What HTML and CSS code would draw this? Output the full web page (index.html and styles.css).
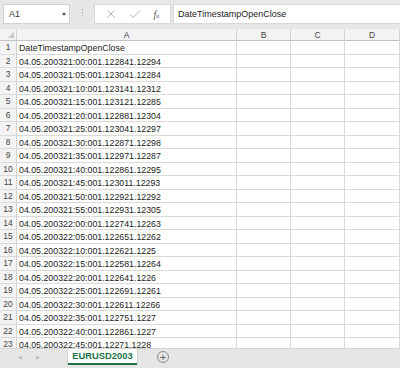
FILE: index.html
```html
<!DOCTYPE html>
<html lang="en">
<head>
	<meta charset="UTF-8">
	<title>EURUSD2003</title>
<link rel="stylesheet" href="styles.css">
</head>
<body>
<div class="app">
	<div class="bar">
		<div class="namebox">A1<span class="drop"></span></div>
		<div class="dots"></div>
		<div class="fxbox">
			<svg class="ico" width="10" height="10" viewBox="0 0 10 10"><path d="M1.5 1.5l7 7M8.5 1.5l-7 7" stroke="#b5b5b5" stroke-width="1" fill="none"/></svg>
			<svg class="ico" width="12" height="10" viewBox="0 0 12 10"><path d="M1 5.5l3.2 3L11 1.5" stroke="#b5b5b5" stroke-width="1" fill="none"/></svg>
			<span class="fx">f<small>x</small></span>
		</div>
		<div class="formula">DateTimestampOpenClose</div>
	</div>
	<div class="sheet">
		<div class="row head">
			<div class="corner"><span class="tri"></span></div>
			<div>A</div><div>B</div><div>C</div><div>D</div>
		</div>
		<div id="rows"></div>
	</div>
	<div class="tabs">
		<span class="arrow">&#9664;</span>
		<span class="arrow">&#9654;</span>
		<div class="tab">EURUSD2003</div>
		<span class="plus">+</span>
	</div>
</div>
<script type="text/javascript">
(function(){
	var data=['DateTimestampOpenClose',
		'04.05.200321:00:001.122841.12294',
		'04.05.200321:05:001.123041.12284',
		'04.05.200321:10:001.123141.12312',
		'04.05.200321:15:001.123121.12285',
		'04.05.200321:20:001.122881.12304',
		'04.05.200321:25:001.123041.12297',
		'04.05.200321:30:001.122871.12298',
		'04.05.200321:35:001.122971.12287',
		'04.05.200321:40:001.122861.12295',
		'04.05.200321:45:001.123011.12293',
		'04.05.200321:50:001.122921.12292',
		'04.05.200321:55:001.122931.12305',
		'04.05.200322:00:001.122741.12263',
		'04.05.200322:05:001.122651.12262',
		'04.05.200322:10:001.122621.1225',
		'04.05.200322:15:001.122581.12264',
		'04.05.200322:20:001.122641.1226',
		'04.05.200322:25:001.122691.12261',
		'04.05.200322:30:001.122611.12266',
		'04.05.200322:35:001.122751.1227',
		'04.05.200322:40:001.122861.1227',
		'04.05.200322:45:001.12271.1228'];
	var box=document.getElementById('rows');
	var html='';
	for(let i=0;i<data.length;i++){
		html+='<div class="row"><div class="num">'+(i+1)+'</div><div class="cell">'+data[i]+'</div><div></div><div></div><div></div></div>';
	}
	box.innerHTML=html;
})()
</script>
</body>
</html>
```
FILE: styles.css
```css
*{
	box-sizing: border-box;
}
body{
	margin: 0;
	font-family: "Liberation Sans", Arial, sans-serif;
	font-size: 8.8px;
	color: #222;
}
.app{
	width: 400px;
	height: 368px;
	display: flex;
	flex-direction: column;
	overflow: hidden;
}
.bar{
	height: 29px;
	flex: none;
	background: #e7e7e7;
	display: flex;
	align-items: flex-start;
	padding: 4px 0 0 3px;
}
.namebox{
	width: 67px;
	height: 20px;
	background: #fff;
	border: 1px solid #d0d0d0;
	display: flex;
	align-items: center;
	padding-left: 5px;
	font-size: 9px;
	color: #333;
	position: relative;
}
.drop{
	position: absolute;
	right: 3px;
	top: 8px;
	border-left: 2.5px solid transparent;
	border-right: 2.5px solid transparent;
	border-top: 3px solid #555;
}
.dots{
	width: 1px;
	height: 9px;
	margin: 5px 11px 0 12px;
	background: repeating-linear-gradient(#aaa 0 1px, transparent 1px 3px);
}
.fxbox{
	width: 77px;
	height: 20px;
	background: #fff;
	border: 1px solid #d8d8d8;
	display: flex;
	align-items: center;
	justify-content: space-around;
	padding: 0 4px;
}
.fx{
	font-family: "Liberation Serif", serif;
	font-style: italic;
	font-size: 10px;
	color: #555;
}
.fx small{
	font-size: 7px;
}
.formula{
	flex: 1;
	height: 20px;
	margin-left: 2px;
	background: #fff;
	border: 1px solid #d8d8d8;
	border-right: none;
	display: flex;
	align-items: center;
	padding-left: 4px;
	font-size: 9px;
}
.sheet{
	flex: 1;
	overflow: hidden;
	background: #fff;
}
.row{
	display: grid;
	grid-template-columns: 17px 220px 54px 54px 1fr;
	height: 13.5px;
}
.row > div{
	border-right: 1px solid #dadada;
	border-bottom: 1px solid #dadada;
	line-height: 13px;
	white-space: nowrap;
	overflow: hidden;
}
.head{
	height: 12px;
	background: #f3f3f3;
}
.head > div{
	text-align: center;
	color: #444;
	line-height: 12px;
	font-size: 8.5px;
	border-bottom-color: #c4c4c4;
	border-right-color: #d2d2d2;
}
.corner{
	position: relative;
}
.tri{
	position: absolute;
	right: 2px;
	bottom: 2px;
	border-left: 6px solid transparent;
	border-bottom: 6px solid #c8c8c8;
}
.num{
	background: #f3f3f3;
	text-align: center;
	color: #444;
	font-size: 8.4px;
	border-right-color: #d2d2d2 !important;
}
.cell{
	padding-left: 2px;
	padding-top: 1px;
}
.tabs{
	height: 20px;
	flex: none;
	background: #e6e6e6;
	border-top: 1px solid #d4d4d4;
	display: flex;
	align-items: flex-start;
	padding-left: 18px;
}
.arrow{
	font-size: 5px;
	color: #bcbcbc;
	width: 18px;
	line-height: 16px;
}
.tab{
	margin-left: 14px;
	width: 69px;
	height: 16px;
	background: #fff;
	color: #217346;
	font-weight: bold;
	font-size: 9.4px;
	text-align: center;
	line-height: 14px;
	border-bottom: 2px solid #217346;
	box-shadow: 1px 0 0 #d0d0d0, -1px 0 0 #d0d0d0;
}
.plus{
	margin: 2px 0 0 20px;
	width: 12px;
	height: 12px;
	border: 1px solid #8a8a8a;
	border-radius: 50%;
	color: #666;
	font-size: 11px;
	line-height: 10px;
	text-align: center;
}
```
